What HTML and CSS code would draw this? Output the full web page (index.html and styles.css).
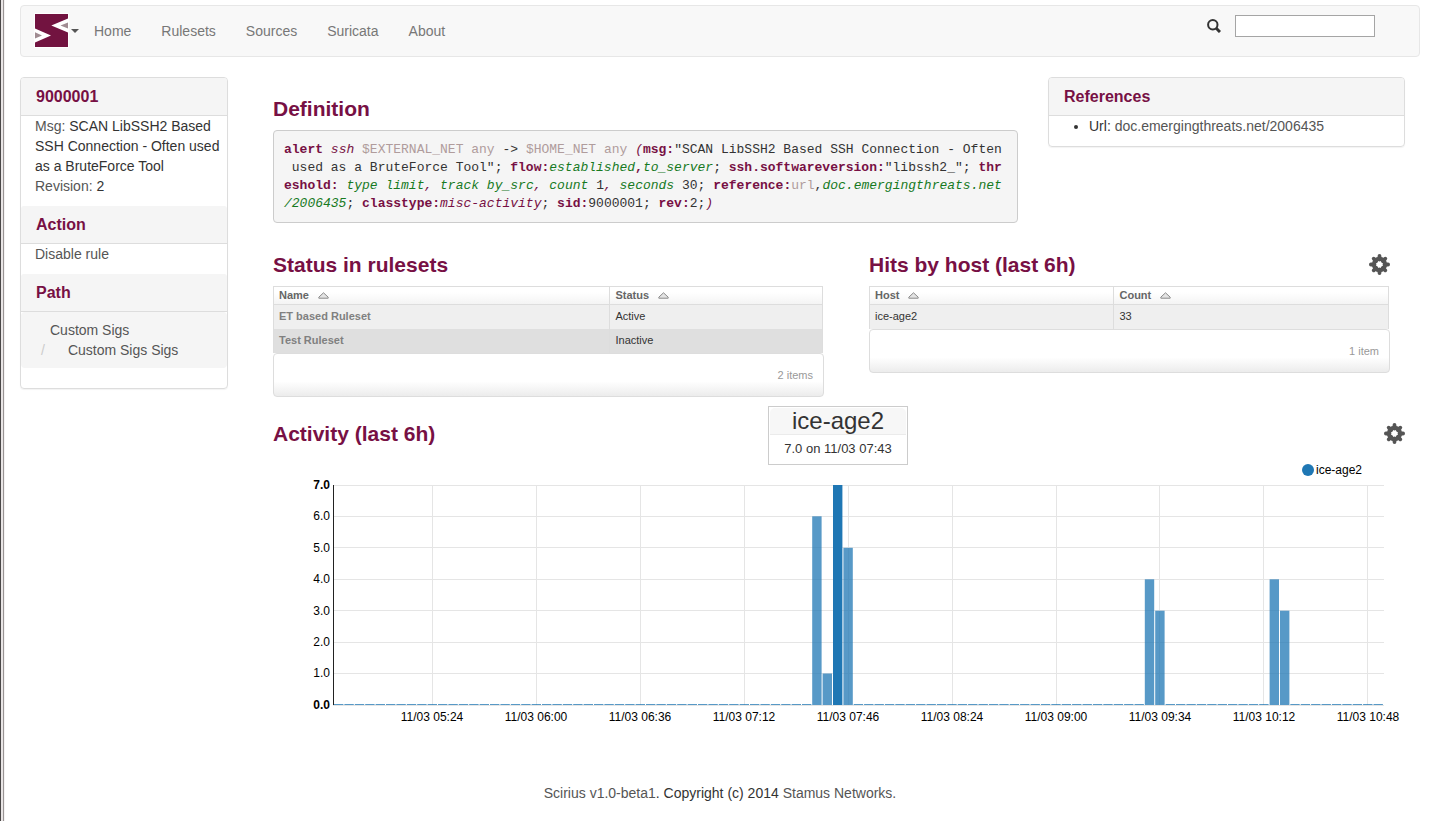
FILE: index.html
```html
<!DOCTYPE html>
<html lang="en">
<head>
<meta charset="utf-8">
<title>Scirius - Rule 9000001</title>
<link rel="stylesheet" href="styles.css">
</head>
<body>
<svg class="defs" aria-hidden="true">
  <symbol id="cog" viewBox="0 0 21 21">
    <g stroke="currentColor" stroke-width="3.800" stroke-linecap="round">
      <path d="M10.500 1.900V5.500M10.500 15.500v3.600M1.900 10.500h3.600M15.500 10.500h3.600"/>
      <path d="M4.700 4.700l2.500 2.500M13.800 13.800l2.500 2.500M4.700 16.300l2.500-2.500M13.800 7.200l2.500-2.500"/>
    </g>
    <circle cx="10.500" cy="10.500" r="5.700" fill="none" stroke="currentColor" stroke-width="4"/>
  </symbol>
  <symbol id="sort" viewBox="0 0 11 7">
    <path d="M.8 5.200L5.500 .8l4.700 4.400v1H.8z" fill="#e4e4e4" stroke="#8a8a8a"/>
  </symbol>
</svg>
<div class="page">
  <nav class="navbar">
    <button class="brand" type="button" aria-label="Scirius menu">
      <svg class="logo" viewBox="0 0 33 33">
        <path fill="#721340" d="M0 0h33v33H0z"/>
        <path fill="#fff" d="M33 4.500L16.300 11.500 33 18.600zM0 14.500l16 7-16 7z"/>
        <path fill="#a08c92" d="M33 8.500l-7.500 3 7.500 3zM0 18.300l7 3.200-7 3z"/>
      </svg>
      <span class="caret"></span>
    </button>
    <ul class="menu">
      <li><a href="#">Home</a></li>
      <li><a href="#">Rulesets</a></li>
      <li><a href="#">Sources</a></li>
      <li><a href="#">Suricata</a></li>
      <li><a href="#">About</a></li>
    </ul>
    <form class="search">
      <label for="q" aria-label="Search">
        <svg class="glass" viewBox="0 0 14 14"><circle cx="5.800" cy="5.800" r="4.700" fill="none" stroke="#333" stroke-width="2"/><path d="M9 9l4 4" stroke="#333" stroke-width="3"/></svg>
      </label>
      <input id="q" type="text">
    </form>
  </nav>

  <div class="layout">
    <aside class="panel">
      <h2 class="panel-title">9000001</h2>
      <div class="panel-text"><span class="muted">Msg:</span> SCAN LibSSH2 Based SSH Connection - Often used as a BruteForce Tool<br><span class="muted">Revision:</span> 2</div>
      <h2 class="panel-title">Action</h2>
      <div class="panel-text"><a href="#">Disable rule</a></div>
      <h2 class="panel-title">Path</h2>
      <ol class="breadcrumb">
        <li><a href="#">Custom Sigs</a></li>
        <li><a href="#">Custom Sigs Sigs</a></li>
      </ol>
    </aside>

    <main>
      <div class="top">
        <section class="definition">
          <h1 class="title">Definition</h1>
          <pre class="rule"><b>alert</b> <i>ssh</i> <span class="v">$EXTERNAL_NET any</span> -&gt; <span class="v">$HOME_NET any</span> <i>(</i><b>msg:</b>"SCAN LibSSH2 Based SSH Connection - Often
 used as a BruteForce Tool"; <b>flow:</b><em>established</em><b>,</b><em>to_server</em>; <b>ssh.softwareversion:</b>"libssh2_"; <b>threshold:</b> <em>type limit</em><i>,</i> <em>track by_src</em><i>,</i> <em>count</em> 1<i>,</i> <em>seconds</em> 30; <b>reference:</b><span class="v">url</span>,<em>doc.emergingthreats.net<wbr>/2006435</em>; <b>classtype:</b><i>misc-activity</i>; <b>sid:</b>9000001; <b>rev:</b>2;<i>)</i></pre>
        </section>
        <aside class="panel">
          <h2 class="panel-title">References</h2>
          <ul class="refs"><li>Url: <a href="#">doc.emergingthreats.net/2006435</a></li></ul>
        </aside>
      </div>

      <div class="tables">
        <section>
          <h1 class="title">Status in rulesets</h1>
          <table class="grid status">
            <thead><tr>
              <th><a href="#">Name<svg class="sort"><use href="#sort"/></svg></a></th>
              <th><a href="#">Status<svg class="sort"><use href="#sort"/></svg></a></th>
            </tr></thead>
            <tbody>
              <tr><td><a href="#">ET based Ruleset</a></td><td>Active</td></tr>
              <tr><td><a href="#">Test Ruleset</a></td><td>Inactive</td></tr>
            </tbody>
          </table>
          <div class="count">2 items</div>
        </section>
        <section>
          <div class="heading">
            <h1 class="title">Hits by host (last 6h)</h1>
            <button class="gear" type="button" aria-label="Hits settings"><svg><use href="#cog"/></svg></button>
          </div>
          <table class="grid hits">
            <thead><tr>
              <th><a href="#">Host<svg class="sort"><use href="#sort"/></svg></a></th>
              <th><a href="#">Count<svg class="sort"><use href="#sort"/></svg></a></th>
            </tr></thead>
            <tbody><tr><td>ice-age2</td><td>33</td></tr></tbody>
          </table>
          <div class="count">1 item</div>
        </section>
      </div>

      <section class="activity">
        <div class="heading">
          <h1 class="title">Activity (last 6h)</h1>
          <button class="gear" type="button" aria-label="Activity settings"><svg><use href="#cog"/></svg></button>
        </div>
        <svg class="chart" viewBox="273 455 1132 290" role="img" aria-label="Activity by host">
          <path class="gridline" d="M333 485.500H1384M333 516.500H1384M333 547.500H1384M333 579.500H1384M333 610.500H1384M333 642.500H1384M333 673.500H1384M333 705.500H1384"/>
          <path class="gridline" d="M432.500 485V705M536.500 485V705M640.500 485V705M744.500 485V705M848.500 485V705M952.500 485V705M1056.500 485V705M1159.500 485V705M1263.500 485V705M1367.500 485V705"/>
          <path class="axis" d="M333.500 485V705"/>
          <g class="zero">
            <path d="M334 704.500H811.500"/><path d="M853.700 704.500H1144.200"/>
            <path d="M1165.600 704.500H1269"/><path d="M1290.300 704.500H1383.500"/>
          </g>
          <g class="bars">
            <rect x="812.200" y="516.300" width="9.400" height="188.700"/>
            <rect x="822.600" y="673.500" width="9.400" height="31.500"/>
            <rect class="active" x="833" y="485" width="9.400" height="220"/>
            <rect x="843.400" y="547.800" width="9.400" height="157.200"/>
            <rect x="1144.800" y="579.300" width="9.400" height="125.700"/>
            <rect x="1155.200" y="610.700" width="9.400" height="94.300"/>
            <rect x="1269.600" y="579.300" width="9.400" height="125.700"/>
            <rect x="1280" y="610.700" width="9.400" height="94.300"/>
          </g>
          <g text-anchor="end">
            <text class="bold" x="330" y="489">7.0</text>
            <text x="330" y="520">6.0</text>
            <text x="330" y="552">5.0</text>
            <text x="330" y="583">4.0</text>
            <text x="330" y="615">3.0</text>
            <text x="330" y="646">2.0</text>
            <text x="330" y="677">1.0</text>
            <text class="bold" x="330" y="709">0.0</text>
          </g>
          <g text-anchor="middle">
            <text x="432" y="721">11/03 05:24</text>
            <text x="536" y="721">11/03 06:00</text>
            <text x="640" y="721">11/03 06:36</text>
            <text x="744" y="721">11/03 07:12</text>
            <text x="848" y="721">11/03 07:46</text>
            <text x="952" y="721">11/03 08:24</text>
            <text x="1056" y="721">11/03 09:00</text>
            <text x="1160" y="721">11/03 09:34</text>
            <text x="1264" y="721">11/03 10:12</text>
            <text x="1368" y="721">11/03 10:48</text>
          </g>
          <circle cx="1308" cy="470" r="6" fill="#1f77b4"/>
          <text x="1316" y="474">ice-age2</text>
        </svg>
        <div class="tooltip"><h3>ice-age2</h3><p>7.0 on 11/03 07:43</p></div>
      </section>
    </main>
  </div>
  <footer><a href="#">Scirius v1.0-beta1</a>. Copyright (c) 2014 <a href="#">Stamus Networks.</a></footer>
</div>
</body>
</html>
```
FILE: styles.css
```css
* { box-sizing: border-box; }
body {
  margin: 0;
  font: 14px/20px "Liberation Sans", Arial, sans-serif;
  color: #333;
  background: #fff linear-gradient(90deg, #4a4747 1px, #e9e5e5 1px 3px, #999494 3px 4px, #f4f2f2 4px 5px) left top / 5px 100% no-repeat;
}
a { color: #555; text-decoration: none; }
h1, h2, h3, p, ul, ol { margin: 0; padding: 0; }
button { border: 0; padding: 0; background: none; color: #555; cursor: pointer; }
svg { display: block; }
.defs { position: absolute; width: 0; height: 0; }
.page { min-height: 100vh; padding: 5px 14px 18px 20px; }

.navbar {
  display: flex;
  align-items: center;
  height: 52px;
  padding: 0 44px 0 14px;
  border: 1px solid #e7e7e7;
  border-radius: 4px;
  background: #f8f8f8;
}
.brand { display: flex; align-items: center; gap: 3px; margin-bottom: 1px; }
.logo { width: 33px; height: 33px; outline: 1px solid #fff; }
.caret { border: 4px solid transparent; border-top-color: #555; border-bottom: 0; }
.menu { display: flex; gap: 30px; margin-left: 15px; list-style: none; }
.menu a { color: #777; }
.search { display: flex; gap: 14px; align-items: center; margin: 0 0 10px auto; }
.glass { width: 14px; height: 14px; }
.search input { width: 140px; height: 22px; padding: 1px 4px; border: 1px solid #a5a5a5; background: #fff; }

.layout {
  display: grid;
  grid-template-columns: 208fr 1132fr;
  gap: 45px;
  align-items: start;
  margin-top: 20px;
  padding-right: 15px;
}
.panel {
  border: 1px solid #ddd;
  border-radius: 4px;
  box-shadow: 0 1px 1px rgba(0, 0, 0, .05);
}
.panel-title {
  padding: 10px 15px 9px;
  border-bottom: 1px solid #ddd;
  border-radius: 3px 3px 0 0;
  background: #f5f5f5;
  color: #771044;
  font-size: 16px;
  line-height: 18px;
}
.panel-text { padding: 0 0 10px 14px; }
.muted { color: #555; }
.breadcrumb { margin-bottom: 20px; padding: 8px 15px; border-radius: 4px; background: #f5f5f5; list-style: none; }
.breadcrumb li { padding-left: 14px; }
.breadcrumb li + li { padding-left: 5px; }
.breadcrumb li + li::before { content: "/"; padding-right: 23px; color: #ccc; }
.refs { padding: 0 0 10px 40px; }

.top { display: grid; grid-template-columns: 745fr 357fr; gap: 30px; align-items: start; }
.definition { padding-top: 20px; }
.title { color: #771044; font-size: 21px; line-height: 23px; }
.rule {
  margin: 10px 0 0;
  padding: 10px 10px 9px;
  border: 1px solid #ccc;
  border-radius: 4px;
  background: #f5f5f5;
  font: 13px/18px "Liberation Mono", "Courier New", monospace;
  white-space: pre-wrap;
  word-break: break-all;
}
.rule b, .rule i { color: #771044; }
.rule em { color: #177a1f; }
.rule .v { color: #b09c9c; }

.tables {
  display: grid;
  grid-template-columns: 551fr 521fr;
  gap: 45px;
  align-items: start;
  margin-top: 30px;
  padding-right: 15px;
}
.heading { display: flex; justify-content: space-between; align-items: center; }
.gear svg { width: 21px; height: 21px; }
.grid {
  width: calc(100% - 1px);
  margin-top: 10px;
  border: 1px solid #ddd;
  border-bottom: 0;
  border-spacing: 0;
  table-layout: fixed;
  font-size: 11px;
  line-height: 17px;
}
.grid th { height: 18px; padding: 0 5px; border-bottom: 1px solid #ddd; background: linear-gradient(#fff 30%, #f4f4f4); text-align: left; }
.grid th a { display: flex; align-items: center; gap: 9px; color: #666; }
.sort { width: 11px; height: 7px; }
.grid td { height: 24px; padding: 0 5px 2px; background: #efefef; }
.grid tr > :first-child { border-right: 1px solid #ddd; }
.grid td a { color: #808080; font-weight: bold; }
.grid tr:nth-child(even) td { background: #dfdfdf; }
.status th:first-child { width: 61.4%; }
.hits th:first-child { width: 47.2%; }
.count {
  height: 44px;
  padding: 0 10px;
  border: 1px solid #ddd;
  border-radius: 4px;
  background: linear-gradient(#fff 65%, #ececec);
  color: #999;
  font-size: 11px;
  line-height: 42px;
  text-align: right;
}

.activity { position: relative; margin-top: 25px; }
.chart { width: 100%; margin-top: 10px; font-size: 12px; }
.gridline { fill: none; stroke: #e5e5e5; shape-rendering: crispEdges; }
.axis { stroke: #222; shape-rendering: crispEdges; }
.zero { stroke: #1f77b4; stroke-dasharray: 9.4 1; opacity: .75; }
.bars rect { fill: #1f77b4; fill-opacity: .75; }
.bars .active { fill-opacity: 1; }
.bold { font-weight: bold; }
.chart text { fill: #000; }
.tooltip {
  position: absolute;
  top: -16px;
  left: 495px;
  width: 140px;
  padding: 1px;
  border: 1px solid #ccc;
  background: #fff;
  text-align: center;
}
.tooltip h3 { border-bottom: 1px solid #ebebeb; border-radius: 5px 5px 0 0; background: #f7f7f7; font-size: 24px; font-weight: normal; line-height: 26px; }
.tooltip p { padding: 5px 0; font-size: 13px; line-height: 18px; }
footer { margin-top: 38px; text-align: center; }
```
